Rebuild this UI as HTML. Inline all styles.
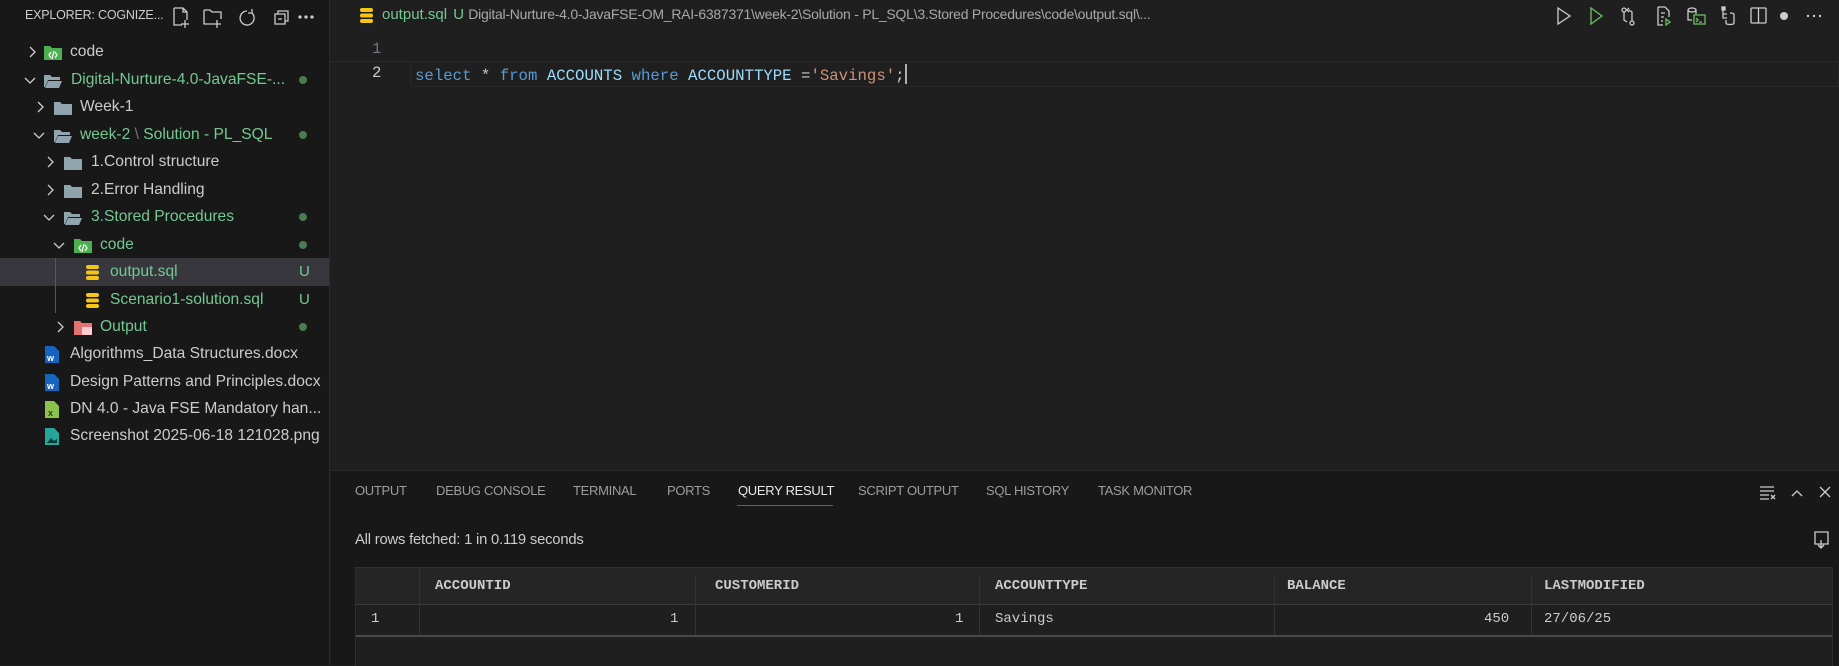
<!DOCTYPE html>
<html><head><meta charset="utf-8"><style>
*{margin:0;padding:0;box-sizing:border-box}
body{width:1839px;height:665px;background:#1f1f1f;overflow:hidden;font-family:"Liberation Sans",sans-serif;color:#cccccc;position:relative}
.a{position:absolute;white-space:nowrap}
#side{position:absolute;left:0;top:0;width:330px;height:665px;background:#181818;border-right:1px solid #2b2b2b}
.row{position:absolute;left:0;width:329px;height:28px;font-size:15.6px;line-height:28px}
.row span{position:absolute;top:0}
.g{color:#73c991}
.chev{position:absolute;top:8px;width:12px;height:12px}
.dot{position:absolute;left:299px;top:10px;width:8px;height:8px;border-radius:50%;background:#4b7b55}
.U{position:absolute;left:299px;color:#73c991;font-size:15px}
.mono{font-family:"Liberation Mono",monospace}
#panel{position:absolute;left:331px;top:470px;width:1508px;height:195px;background:#181818;border-top:1px solid #2b2b2b}
.tab{position:absolute;top:12px;font-size:13px;color:#9d9d9d;letter-spacing:-0.3px}
</style></head><body>
<div id="side">
 <div class="a" style="left:25px;top:8px;font-size:12.5px;color:#cccccc;letter-spacing:-0.2px">EXPLORER: COGNIZE...</div>
 <svg class="a" style="left:172px;top:6px" width="145" height="22" fill="none" stroke="#cccccc" stroke-width="1.3">
  <path d="M2 2h9l4 4v8M2 2v17h8M11 2v4h4M13 14v8M9 18h8"/>
  <path d="M32 4h6l2 2h9v7M32 4v14h9M45 14v8M41 18h8"/>
  <path d="M75 5a7 7 0 1 0 5 2M80 3v4h-4"/>
  <path d="M103 8h10v10h-10zM106 8v-3h10v10h-3M106 13h4"/>
  <circle cx="128" cy="11" r="1" fill="#ccc"/><circle cx="134" cy="11" r="1" fill="#ccc"/><circle cx="140" cy="11" r="1" fill="#ccc"/>
 </svg>
 <div class="row" style="top:38px">
  <svg class="chev" style="left:26px" viewBox="0 0 12 12"><path d="M4 1l5 5-5 5" stroke="#ccc" stroke-width="1.3" fill="none"/></svg>
  <svg class="a" style="left:44px;top:7px" width="18" height="15"><path d="M0 1h6l2 2h10v12H0z" fill="#4caf50"/><path d="M7 7l-2 3 2 3M11 7l2 3-2 3M10 6l-2 8" stroke="#fff" stroke-width="1.2" fill="none"/></svg>
  <span style="left:70px">code</span>
 </div>
 <div class="row" style="top:66px">
  <svg class="chev" style="left:24px" viewBox="0 0 12 12"><path d="M1 4l5 5 5-5" stroke="#ccc" stroke-width="1.3" fill="none"/></svg>
  <svg class="a" style="left:44px;top:8px" width="18" height="14"><path d="M0 1h6l2 2h8v3H4L1 13H0z M4 7h14l-3 7H1z" fill="#90a4ae"/></svg>
  <span class="g" style="left:71px">Digital-Nurture-4.0-JavaFSE-...</span><div class="dot"></div>
 </div>
 <div class="row" style="top:93px">
  <svg class="chev" style="left:34px" viewBox="0 0 12 12"><path d="M4 1l5 5-5 5" stroke="#ccc" stroke-width="1.3" fill="none"/></svg>
  <svg class="a" style="left:54px;top:8px" width="18" height="14"><path d="M0 1h6l2 2h10v11H0z" fill="#90a4ae"/></svg>
  <span style="left:80px">Week-1</span>
 </div>
 <div class="row" style="top:121px">
  <svg class="chev" style="left:33px" viewBox="0 0 12 12"><path d="M1 4l5 5 5-5" stroke="#ccc" stroke-width="1.3" fill="none"/></svg>
  <svg class="a" style="left:54px;top:8px" width="18" height="14"><path d="M0 1h6l2 2h8v3H4L1 13H0z M4 7h14l-3 7H1z" fill="#90a4ae"/></svg>
  <span class="g" style="left:80px">week-2<span style="position:static;color:#777"> \ </span>Solution - PL_SQL</span><div class="dot"></div>
 </div>
 <div class="row" style="top:148px">
  <svg class="chev" style="left:44px" viewBox="0 0 12 12"><path d="M4 1l5 5-5 5" stroke="#ccc" stroke-width="1.3" fill="none"/></svg>
  <svg class="a" style="left:64px;top:8px" width="18" height="14"><path d="M0 1h6l2 2h10v11H0z" fill="#90a4ae"/></svg>
  <span style="left:91px">1.Control structure</span>
 </div>
 <div class="row" style="top:176px">
  <svg class="chev" style="left:44px" viewBox="0 0 12 12"><path d="M4 1l5 5-5 5" stroke="#ccc" stroke-width="1.3" fill="none"/></svg>
  <svg class="a" style="left:64px;top:8px" width="18" height="14"><path d="M0 1h6l2 2h10v11H0z" fill="#90a4ae"/></svg>
  <span style="left:91px">2.Error Handling</span>
 </div>
 <div class="row" style="top:203px">
  <svg class="chev" style="left:43px" viewBox="0 0 12 12"><path d="M1 4l5 5 5-5" stroke="#ccc" stroke-width="1.3" fill="none"/></svg>
  <svg class="a" style="left:64px;top:8px" width="18" height="14"><path d="M0 1h6l2 2h8v3H4L1 13H0z M4 7h14l-3 7H1z" fill="#90a4ae"/></svg>
  <span class="g" style="left:91px">3.Stored Procedures</span><div class="dot"></div>
 </div>
 <div class="row" style="top:231px">
  <svg class="chev" style="left:53px" viewBox="0 0 12 12"><path d="M1 4l5 5 5-5" stroke="#ccc" stroke-width="1.3" fill="none"/></svg>
  <svg class="a" style="left:74px;top:7px" width="18" height="15"><path d="M0 1h6l2 2h10v12H0z" fill="#4caf50"/><path d="M7 7l-2 3 2 3M11 7l2 3-2 3M10 6l-2 8" stroke="#fff" stroke-width="1.2" fill="none"/></svg>
  <span class="g" style="left:100px">code</span><div class="dot"></div>
 </div>
 <div class="row" style="top:258px;background:#37373d">
  <svg class="a" style="left:86px;top:7px" width="13" height="15"><g fill="#f5c518"><rect x="0" y="0" width="13" height="4" rx="2"/><rect x="0" y="5.5" width="13" height="4" rx="2"/><rect x="0" y="11" width="13" height="4" rx="2"/></g></svg>
  <span class="g" style="left:110px">output.sql</span><span class="U">U</span>
 </div>
 <div class="row" style="top:286px">
  <svg class="a" style="left:86px;top:7px" width="13" height="15"><g fill="#f5c518"><rect x="0" y="0" width="13" height="4" rx="2"/><rect x="0" y="5.5" width="13" height="4" rx="2"/><rect x="0" y="11" width="13" height="4" rx="2"/></g></svg>
  <span class="g" style="left:110px">Scenario1-solution.sql</span><span class="U">U</span>
 </div>
 <div class="a" style="left:55px;top:258px;width:1px;height:55px;background:#585858"></div>
 <div class="row" style="top:313px">
  <svg class="chev" style="left:54px" viewBox="0 0 12 12"><path d="M4 1l5 5-5 5" stroke="#ccc" stroke-width="1.3" fill="none"/></svg>
  <svg class="a" style="left:74px;top:7px" width="19" height="15"><path d="M0 1h6l2 2h10v12H0z" fill="#e57373"/><rect x="8" y="7" width="10" height="8" rx="1" fill="#ffcdd2"/></svg>
  <span class="g" style="left:100px">Output</span><div class="dot"></div>
 </div>
 <div class="row" style="top:340px">
  <svg class="a" style="left:45px;top:6px" width="14" height="17"><path d="M0 0h9l5 5v12H0z" fill="#1565c0"/><text x="2" y="15" font-size="9" font-family="Liberation Sans" font-weight="bold" fill="#fff">w</text></svg>
  <span style="left:70px">Algorithms_Data Structures.docx</span>
 </div>
 <div class="row" style="top:368px">
  <svg class="a" style="left:45px;top:6px" width="14" height="17"><path d="M0 0h9l5 5v12H0z" fill="#1565c0"/><text x="2" y="15" font-size="9" font-family="Liberation Sans" font-weight="bold" fill="#fff">w</text></svg>
  <span style="left:70px">Design Patterns and Principles.docx</span>
 </div>
 <div class="row" style="top:395px">
  <svg class="a" style="left:45px;top:6px" width="14" height="17"><path d="M0 0h9l5 5v12H0z" fill="#8bc34a"/><text x="3" y="15" font-size="9" font-family="Liberation Sans" font-weight="bold" fill="#333">x</text></svg>
  <span style="left:70px">DN 4.0 - Java FSE Mandatory han...</span>
 </div>
 <div class="row" style="top:422px">
  <svg class="a" style="left:45px;top:6px" width="14" height="17"><path d="M0 0h9l5 5v12H0z" fill="#26a69a"/><path d="M2 15l4-5 3 3 3-2v4z" fill="#0d3b36"/></svg>
  <span style="left:70px">Screenshot 2025-06-18 121028.png</span>
 </div>
</div>

<svg class="a" style="left:360px;top:8px" width="13" height="15"><g fill="#f5c518"><rect x="0" y="0" width="13" height="4" rx="2"/><rect x="0" y="5.5" width="13" height="4" rx="2"/><rect x="0" y="11" width="13" height="4" rx="2"/></g></svg>
<div class="a" style="left:382px;top:6px;font-size:15px;color:#73c991">output.sql <span style="color:#73c991;margin-left:2px">U</span> <span style="color:#a8a8a8;font-size:14px;letter-spacing:-0.25px">Digital-Nurture-4.0-JavaFSE-OM_RAI-6387371\week-2\Solution - PL_SQL\3.Stored Procedures\code\output.sql\...</span></div>
<svg class="a" style="left:1555px;top:5px" width="284" height="22" fill="none" stroke-width="1.3">
 <path d="M3 3l12 8-12 8z" stroke="#cccccc"/>
 <path d="M36 3l11 8-11 8z" stroke="#6cbf62"/>
 <g stroke="#cccccc"><circle cx="69" cy="5" r="2"/><circle cx="77" cy="18" r="2"/><path d="M69 7v8l3 2M77 16v-9l-3-2M74 3l-2 2 2 2"/></g>
 <g stroke="#cccccc"><path d="M103 2h7l4 4v6M103 2v18h5M106 8h4M106 12h3M106 16h2"/></g><path d="M111 14l4 3-4 3z" stroke="#6cbf62"/>
 <g stroke="#cccccc"><ellipse cx="137" cy="5" rx="4" ry="2"/><path d="M133 5v10h4M141 5v4"/></g><rect x="139" y="10" width="11" height="9" stroke="#6cbf62"/><path d="M141 13l2 2-2 2M144 17h3" stroke="#6cbf62"/>
 <g stroke="#cccccc"><rect x="167" y="2" width="3" height="3" fill="#ccc"/><path d="M168 5v8h4M168 9h4"/><path d="M175 8c4 0 4 1 4 2v8c0 2-8 2-8 0v-3"/></g>
 <g stroke="#cccccc"><rect x="196" y="3" width="15" height="15" rx="1"/><path d="M203.5 3v15"/></g>
 <circle cx="229" cy="11" r="4" fill="#cccccc" stroke="none"/>
 <g fill="#cccccc" stroke="none"><circle cx="253" cy="11" r="1.2"/><circle cx="259" cy="11" r="1.2"/><circle cx="265" cy="11" r="1.2"/></g>
</svg>
<div class="a" style="left:331px;top:61px;width:1508px;height:1px;background:#2b2b2b"></div>
<div class="a mono" style="left:372px;top:40px;font-size:15.7px;color:#6e7681">1</div>
<div class="a" style="left:410px;top:61px;width:1429px;height:26px;border:1px solid #282828"></div>
<div class="a mono" style="left:372px;top:64px;font-size:15.7px;color:#cccccc">2</div>
<div class="a mono" style="left:415px;top:64px;font-size:15.7px;color:#cccccc"><span style="color:#569cd6">select</span> * <span style="color:#569cd6">from</span> <span style="color:#9cdcfe">ACCOUNTS</span> <span style="color:#569cd6">where</span> <span style="color:#9cdcfe">ACCOUNTTYPE</span> =<span style="color:#ce9178">'Savings'</span>;<span style="display:inline-block;width:2px;height:20px;background:#aeafad;vertical-align:-4px"></span></div>

<div id="panel">
 <div class="tab" style="left:24px">OUTPUT</div>
 <div class="tab" style="left:105px">DEBUG CONSOLE</div>
 <div class="tab" style="left:242px">TERMINAL</div>
 <div class="tab" style="left:336px">PORTS</div>
 <div class="tab" style="left:407px;color:#e7e7e7">QUERY RESULT</div>
 <div class="a" style="left:406px;top:34px;width:96px;height:1px;background:#0078d4"></div>
 <div class="tab" style="left:527px">SCRIPT OUTPUT</div>
 <div class="tab" style="left:655px">SQL HISTORY</div>
 <div class="tab" style="left:767px">TASK MONITOR</div>
 <svg class="a" style="left:1428px;top:12px" width="80" height="20" fill="none" stroke="#cccccc" stroke-width="1.3">
  <path d="M1 4h14M1 8h14M1 12h9M1 16h9M12 12l4 4M16 12l-4 4"/>
  <path d="M33 13l5-5 5 5"/>
  <path d="M61 4l10 10M71 4l-10 10"/>
 </svg>
 <div class="a" style="left:24px;top:61px;font-size:14.8px;color:#cccccc;letter-spacing:-0.2px">All rows fetched: 1 in 0.119 seconds</div>
 <svg class="a" style="left:1482px;top:59px" width="18" height="20" fill="none" stroke="#cccccc" stroke-width="1.3"><path d="M2 2h13v12H2zM8 10v8M5 15l3 3 3-3"/></svg>
 <div class="a" style="left:24px;top:96px;width:1478px;height:99px;background:#1f1f1f;border:1px solid #303030;border-bottom:none"></div>
 <div class="a" style="left:25px;top:97px;width:1476px;height:37px;background:#252526;border-bottom:1px solid #3a3a3a"></div>
 <div class="a" style="left:25px;top:164px;width:1476px;height:2px;background:#4a4a4a"></div>
 <div class="a" style="left:88px;top:97px;width:1px;height:67px;background:#333"></div>
 <div class="a" style="left:364px;top:105px;width:1px;height:59px;background:#333"></div>
 <div class="a" style="left:648px;top:105px;width:1px;height:59px;background:#333"></div>
 <div class="a" style="left:943px;top:105px;width:1px;height:59px;background:#333"></div>
 <div class="a" style="left:1200px;top:105px;width:1px;height:59px;background:#333"></div>
 <div class="a mono" style="left:104px;top:107px;font-size:14px;font-weight:bold;color:#cccccc">ACCOUNTID</div>
 <div class="a mono" style="left:384px;top:107px;font-size:14px;font-weight:bold;color:#cccccc">CUSTOMERID</div>
 <div class="a mono" style="left:664px;top:107px;font-size:14px;font-weight:bold;color:#cccccc">ACCOUNTTYPE</div>
 <div class="a mono" style="left:956px;top:107px;font-size:14px;font-weight:bold;color:#cccccc">BALANCE</div>
 <div class="a mono" style="left:1213px;top:107px;font-size:14px;font-weight:bold;color:#cccccc">LASTMODIFIED</div>
 <div class="a mono" style="left:40px;top:140px;font-size:14px">1</div>
 <div class="a mono" style="left:339px;top:140px;font-size:14px">1</div>
 <div class="a mono" style="left:624px;top:140px;font-size:14px">1</div>
 <div class="a mono" style="left:664px;top:140px;font-size:14px">Savings</div>
 <div class="a mono" style="left:1153px;top:140px;font-size:14px">450</div>
 <div class="a mono" style="left:1213px;top:140px;font-size:14px">27/06/25</div>
</div>
</body></html>
